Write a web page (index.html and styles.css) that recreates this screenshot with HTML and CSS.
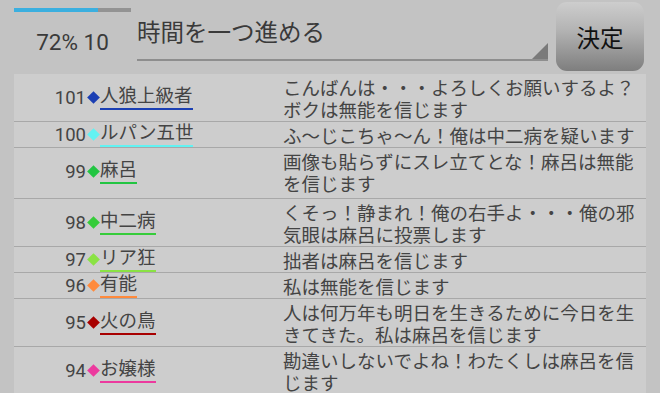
FILE: index.html
```html
<!DOCTYPE html>
<html lang="ja">
<head>
    <meta charset="UTF-8">
    <meta name="viewport" content="width=device-width, initial-scale=1.0">
    <title>人狼</title>
    <link rel="stylesheet" href="styles.css">
</head>
<body>
    <div class="screen">
        <div class="top-bar">
            <div class="status">
                <div class="progress"><div class="progress-fill" style="width: 72%"></div></div>
                <div class="status-text">72% 10</div>
            </div>
            <div class="action-select">
                <span>時間を一つ進める</span>
                <span class="select-arrow"></span>
            </div>
            <button class="btn-decide">決定</button>
        </div>

        <div class="log">
            <div class="row">
                <div class="who"><span class="num">101</span><span class="mark c-blue"></span><span class="name c-blue">人狼上級者</span></div>
                <div class="msg">こんばんは・・・よろしくお願いするよ？ボクは無能を信じます</div>
            </div>
            <div class="row">
                <div class="who"><span class="num">100</span><span class="mark c-cyan"></span><span class="name c-cyan">ルパン五世</span></div>
                <div class="msg">ふ～じこちゃ～ん！俺は中二病を疑います</div>
            </div>
            <div class="row tall">
                <div class="who"><span class="num">99</span><span class="mark c-green"></span><span class="name c-green">麻呂</span></div>
                <div class="msg">画像も貼らずにスレ立てとな！麻呂は無能を信じます</div>
            </div>
            <div class="row">
                <div class="who"><span class="num">98</span><span class="mark c-green2"></span><span class="name c-green2">中二病</span></div>
                <div class="msg">くそっ！静まれ！俺の右手よ・・・俺の邪気眼は麻呂に投票します</div>
            </div>
            <div class="row">
                <div class="who"><span class="num">97</span><span class="mark c-lime"></span><span class="name c-lime">リア狂</span></div>
                <div class="msg">拙者は麻呂を信じます</div>
            </div>
            <div class="row">
                <div class="who"><span class="num">96</span><span class="mark c-orange"></span><span class="name c-orange">有能</span></div>
                <div class="msg">私は無能を信じます</div>
            </div>
            <div class="row">
                <div class="who"><span class="num">95</span><span class="mark c-red"></span><span class="name c-red">火の鳥</span></div>
                <div class="msg">人は何万年も明日を生きるために今日を生きてきた。私は麻呂を信じます</div>
            </div>
            <div class="row">
                <div class="who"><span class="num">94</span><span class="mark c-pink"></span><span class="name c-pink">お嬢様</span></div>
                <div class="msg">勘違いしないでよね！わたくしは麻呂を信じます</div>
            </div>
        </div>
    </div>
</body>
</html>
```

FILE: styles.css
```css
html, body {
    margin: 0;
    padding: 0;
}

body {
    width: 660px;
    height: 393px;
    overflow: hidden;
    background-color: #c3c3c3;
    font-family: Roboto, "Noto Sans CJK JP", sans-serif;
    color: #444;
}

.screen {
    display: flex;
    flex-direction: column;
    padding: 0 14px;
}

.top-bar {
    display: flex;
    height: 74px;
}

.status {
    width: 117px;
    display: flex;
    flex-direction: column;
}

.progress {
    margin-top: 8px;
    height: 4px;
    background-color: #939393;
}

.progress-fill {
    height: 100%;
    background-color: #3bafdf;
}

.status-text {
    margin-top: 15px;
    text-align: center;
    font-size: 22.5px;
    line-height: 30px;
    color: #3a3a3a;
}

.action-select {
    position: relative;
    width: 411px;
    margin-left: 6px;
    height: 61px;
    border-bottom: 2px solid #8e8e8e;
    box-sizing: border-box;
    font-size: 23.5px;
    line-height: 30px;
    padding-top: 18px;
    color: #3a3a3a;
}

.select-arrow {
    position: absolute;
    right: 0;
    bottom: 0;
    width: 0;
    height: 0;
    border-left: 16px solid transparent;
    border-bottom: 16px solid #7a7a7a;
}

.btn-decide {
    margin: 2px 0 0 8px;
    width: 88px;
    height: 69px;
    border: none;
    border-radius: 11px;
    background: linear-gradient(#cdcdcd, #b4b4b4 40%, #7e7e7e);
    font-family: "Noto Sans CJK JP", sans-serif;
    font-size: 23.5px;
    color: #111;
    padding: 0;
}

.log {
    background-color: #cdcdcd;
    width: 632px;
}

.row {
    display: flex;
    border-bottom: 1px solid #a8a8a8;
}

.row.tall {
    padding-bottom: 3px;
}

.who {
    width: 269px;
    display: flex;
    align-items: center;
    font-size: 18.5px;
}

.num {
    width: 72px;
    text-align: right;
}

.mark {
    width: 9px;
    height: 9px;
    margin: 0 2px 0 3px;
    transform: rotate(45deg);
    background-color: currentColor;
}

.name {
    line-height: 20px;
    padding-bottom: 2px;
    border-bottom: 2px solid currentColor;
}

.name {
    color: #444;
}

.msg {
    flex: 1;
    font-size: 18.5px;
    line-height: 22px;
    padding: 2px 4px 1px 0;
    font-family: "Noto Sans CJK JP", sans-serif;
}

.mark.c-blue { color: #1b3fb3; }
.name.c-blue { border-color: #1b3fb3; }
.mark.c-cyan { color: #62f2f2; }
.name.c-cyan { border-color: #62f2f2; }
.mark.c-green { color: #22c542; }
.name.c-green { border-color: #22c542; }
.mark.c-green2 { color: #36cc3a; }
.name.c-green2 { border-color: #36cc3a; }
.mark.c-lime { color: #8ae244; }
.name.c-lime { border-color: #8ae244; }
.mark.c-orange { color: #ff8a3c; }
.name.c-orange { border-color: #ff8a3c; }
.mark.c-red { color: #a80000; }
.name.c-red { border-color: #a80000; }
.mark.c-pink { color: #ec3a9e; }
.name.c-pink { border-color: #ec3a9e; }
```
